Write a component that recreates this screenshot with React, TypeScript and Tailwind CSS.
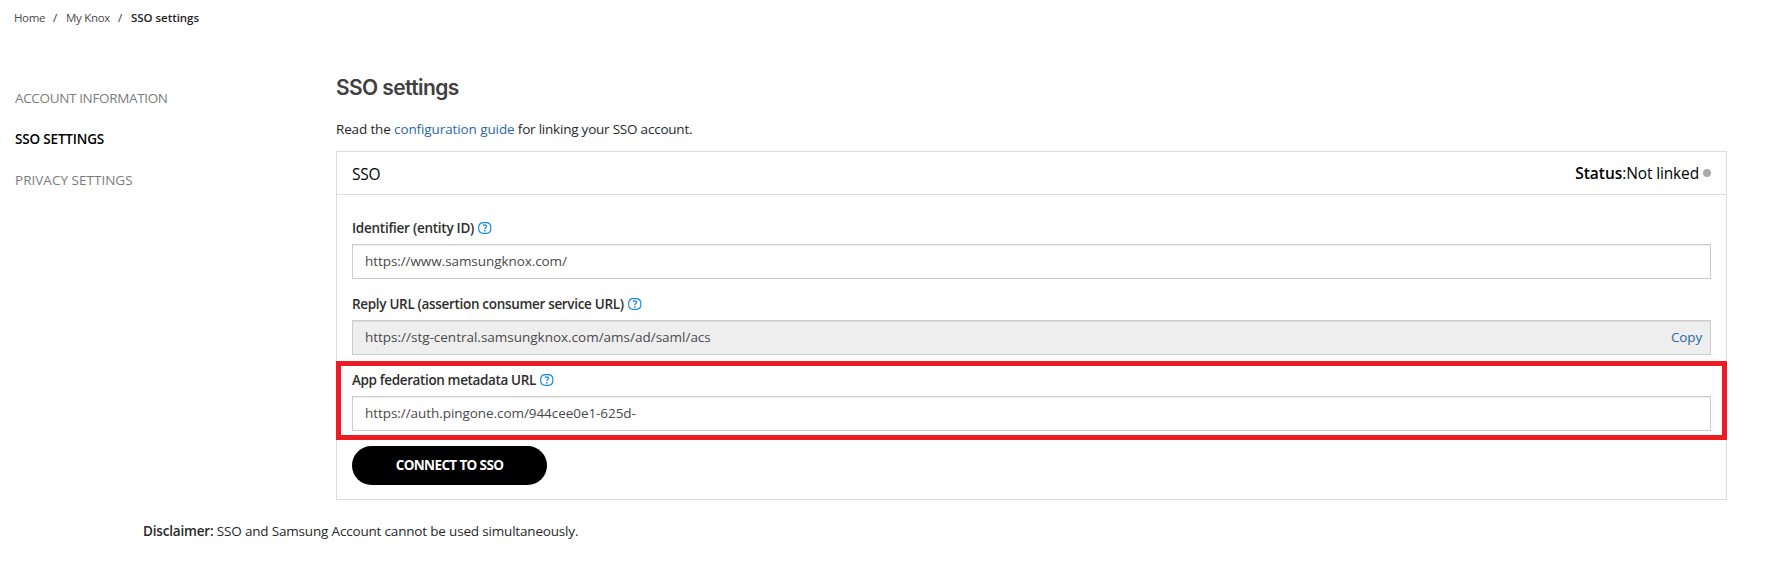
import type { ReactNode } from 'react';

function HelpIcon() {
  return (
    <svg className="h-3 w-[14px] shrink-0" viewBox="0 0 14 12" fill="none" stroke="#1589d8">
      <path d="M5.4 .6H8.2C11.3 .6 12.9 2.9 12.9 6S11.3 11.4 8.2 11.4H5.4C2.3 11.4 .6 9.1 .6 6S2.3 .6 5.4 .6Z" strokeWidth="1.15" />
      <path d="M4.9 3.5C6.2 2.5 8.6 2.7 8.6 4.3C8.6 5.5 6.8 5.6 6.8 7.1" strokeWidth="1.3" />
      <path d="M6.8 8V9.4" strokeWidth="1.4" />
    </svg>
  );
}

function Field({ label, labelClass, value, valueClass, boxClass = 'bg-white', action, highlighted }: {
  label: string;
  labelClass: string;
  value: string;
  valueClass: string;
  boxClass?: string;
  action?: ReactNode;
  highlighted?: boolean;
}) {
  return (
    <div className="relative">
      <div className="flex h-5 items-center gap-1">
        <label className={`whitespace-nowrap font-semibold leading-5 text-[#2e2e2e] ${labelClass}`}>{label}</label>
        <HelpIcon />
      </div>
      <div className={`mt-1.5 flex h-[35px] items-center justify-between border border-[#ccc] pr-2 pb-[2px] pl-3 shadow-[inset_0_1px_1px_rgba(0,0,0,0.075)] ${boxClass}`}>
        <span className={`whitespace-nowrap text-[#4a4a4a] ${valueClass}`}>{value}</span>
        {action}
      </div>
      {highlighted && <div className="pointer-events-none absolute -inset-x-4 -inset-y-[9px] border-[5px] border-[#ed1c24]" />}
    </div>
  );
}

export default function App() {
  return (
    <div className="h-[577px] w-[1786px] overflow-hidden bg-white font-['Open_Sans',sans-serif] text-[13.5px] leading-5 text-[#282828]">
      <nav className="flex pt-2 pl-[14px] text-[11.5px] text-[#4a4a4a]">
        <a className="w-[39px] tracking-[-0.38px]">Home</a>
        <span className="w-[13px] text-[#333]">/</span>
        <a className="w-[52px] tracking-[-0.3px]">My Knox</a>
        <span className="w-[13px] text-[#333]">/</span>
        <span className="font-semibold tracking-[-0.04px] text-[#222]">SSO settings</span>
      </nav>

      <div className="flex">
        <aside className="flex w-[336px] shrink-0 flex-col gap-[21px] pt-[60px] pl-[15px] text-[#7c7c7c]">
          <a className="tracking-[-0.35px]">ACCOUNT INFORMATION</a>
          <a className="font-semibold tracking-[-0.17px] text-black">SSO SETTINGS</a>
          <a className="tracking-[0.02px]">PRIVACY SETTINGS</a>
        </aside>

        <main className="w-[1391px] pt-[46px]">
          <h1 className="font-[Inter,sans-serif] text-[21px] leading-7 font-semibold tracking-[-0.6px] text-[#404040]">SSO settings</h1>
          <p className="mt-[17px] whitespace-pre">
            <span className="tracking-[-0.15px]">Read the </span>
            <a className="tracking-[-0.1px] text-[#2b68a8]">configuration guide</a>
            <span className="tracking-[-0.22px]"> for linking your SSO account.</span>
          </p>

          <section className="mt-3 border border-[#ddd]">
            <header className="flex h-[43px] items-center justify-between border-b border-[#ddd] px-[15px] text-[15.5px] text-black">
              <h2 className="pt-[2px] tracking-[-0.2px]">SSO</h2>
              <div className="flex items-center">
                <span className="font-semibold tracking-[-0.03px]">Status</span>
                <span className="w-1">:</span>
                <span className="tracking-[-0.15px]">Not linked</span>
                <span className="ml-1 size-2 rounded-full bg-[#aaa]" />
              </div>
            </header>
            <div className="flex flex-col gap-[15px] px-[15px] pt-[23px] pb-[14px]">
              <Field
                label="Identifier (entity ID)"
                labelClass="tracking-[-0.26px]"
                value="https://www.samsungknox.com/"
                valueClass="tracking-[-0.07px]"
              />
              <Field
                label="Reply URL (assertion consumer service URL)"
                labelClass="tracking-[-0.32px]"
                value="https://stg-central.samsungknox.com/ams/ad/saml/acs"
                valueClass="tracking-[-0.01px]"
                boxClass="bg-[#eee]"
                action={<button className="tracking-[-0.16px] text-[#2b68a8]">Copy</button>}
              />
              <Field
                label="App federation metadata URL"
                labelClass="tracking-[-0.37px]"
                value="https://auth.pingone.com/944cee0e1-625d-"
                valueClass="tracking-[-0.06px]"
                highlighted
              />
              <button className="h-[39px] w-[195px] rounded-full bg-black pb-px font-bold tracking-[-0.63px] text-white">CONNECT TO SSO</button>
            </div>
          </section>
        </main>
      </div>

      <p className="mt-[21px] pl-[143px] whitespace-pre">
        <span className="font-semibold tracking-[-0.18px]">Disclaimer:</span>
        <span className="tracking-[-0.18px]"> SSO and Samsung Account cannot be used simultaneously.</span>
      </p>
    </div>
  );
}
